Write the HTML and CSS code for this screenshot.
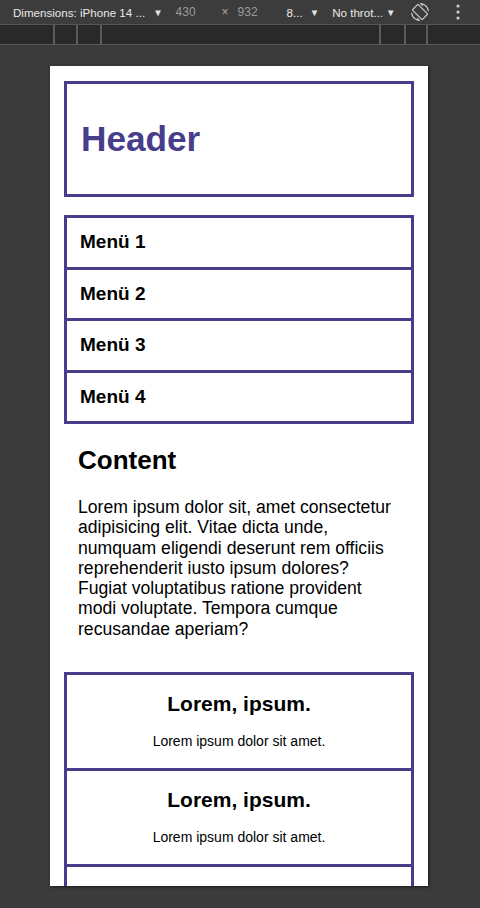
FILE: index.html
```html
<!DOCTYPE html>
<html lang="de">
<head>
<meta charset="utf-8">
<title>Device preview</title>
<link rel="stylesheet" href="styles.css">
</head>
<body>
<div class="toolbar">
  <span class="tb-dim">Dimensions: iPhone 14 ...</span>
  <span class="tb-caret tb-caret1">&#9660;</span>
  <span class="tb-num tb-w">430</span>
  <span class="tb-x">&#215;</span>
  <span class="tb-num tb-h">932</span>
  <span class="tb-zoom">8...</span>
  <span class="tb-caret tb-caret2">&#9660;</span>
  <span class="tb-throt">No throt...</span>
  <span class="tb-caret tb-caret3">&#9660;</span>
  <svg class="tb-rotate" width="18" height="18" viewBox="0 0 24 24" fill="#cfcfcf">
    <path d="M16.48 2.52c3.27 1.55 5.61 4.72 5.970 8.48h1.5C23.44 4.84 18.29 0 12 0l-.66.03 3.81 3.81 1.33-1.32zm-6.25-.77c-.59-.59-1.54-.59-2.12 0L1.75 8.11c-.59.59-.59 1.54 0 2.12l12.02 12.02c.59.59 1.54.59 2.12 0l6.36-6.36c.59-.59.59-1.54 0-2.12L10.23 1.75zm4.6 19.44L2.81 9.17l6.36-6.36 12.02 12.02-6.36 6.36zm-7.31.29C4.25 19.94 1.91 16.76 1.55 13H.05C.56 19.16 5.71 24 12 24l.66-.03-3.81-3.81-1.33 1.32z"/>
  </svg>
  <svg class="tb-kebab" width="4" height="16" viewBox="0 0 4 16" fill="#cfcfcf">
    <circle cx="2" cy="2" r="1.6"/>
    <circle cx="2" cy="8" r="1.6"/>
    <circle cx="2" cy="14" r="1.6"/>
  </svg>
</div>
<div class="ruler">
  <i class="tick t1"></i><i class="tick t2"></i><i class="tick t3"></i><i class="tick t4"></i><i class="tick t5"></i><i class="tick t6"></i>
</div>
<div class="stage">
  <div class="device">
    <header class="site-header">
      <h1>Header</h1>
    </header>
    <nav class="menu">
      <div class="menu-item">Menü 1</div>
      <div class="menu-item">Menü 2</div>
      <div class="menu-item">Menü 3</div>
      <div class="menu-item">Menü 4</div>
    </nav>
    <section class="content">
      <h2>Content</h2>
      <p>Lorem ipsum dolor sit, amet consectetur adipisicing elit. Vitae dicta unde, numquam eligendi deserunt rem officiis reprehenderit iusto ipsum dolores? Fugiat voluptatibus ratione provident modi voluptate. Tempora cumque recusandae aperiam?</p>
    </section>
    <div class="cards">
      <div class="card"><h3>Lorem, ipsum.</h3><p>Lorem ipsum dolor sit amet.</p></div>
      <div class="card"><h3>Lorem, ipsum.</h3><p>Lorem ipsum dolor sit amet.</p></div>
      <div class="card"></div>
    </div>
  </div>
</div>
</body>
</html>
```
FILE: styles.css
```css
* { box-sizing: border-box; }
html, body { margin: 0; padding: 0; }
body {
  width: 480px;
  height: 908px;
  overflow: hidden;
  background: #3b3b3b;
  font-family: "Liberation Sans", Arial, sans-serif;
}

/* DevTools toolbar */
.toolbar {
  height: 25px;
  border-bottom: 1px solid #555555;
  background: #3c3c3c;
  display: flex;
  align-items: center;
  font-size: 11.6px;
  color: #e8e8e8;
  white-space: nowrap;
}
.tb-dim { margin-left: 13px; }
.tb-caret { font-size: 9.5px; color: #e3e3e3; }
.tb-caret1 { margin-left: 8px; }
.tb-num { color: #9a9a9a; font-size: 12px; }
.tb-w { margin-left: 13px; }
.tb-x { margin-left: 26px; color: #b0a8a8; font-size: 12px; }
.tb-h { margin-left: 9px; }
.tb-zoom { margin-left: 29px; }
.tb-caret2 { margin-left: 7px; }
.tb-throt { margin-left: 13px; }
.tb-caret3 { margin-left: 3px; }
.tb-rotate { margin-left: 16px; }
.tb-kebab { margin-left: 27px; }

/* ruler strip */
.ruler {
  height: 20px;
  background: #292929;
  border-bottom: 1px solid #555555;
  display: flex;
}
.tick { display: block; width: 2px; height: 19px; background: #5c5c5c; }
.t1 { margin-left: 53px; }
.t2 { margin-left: 21px; }
.t3 { margin-left: 22px; }
.t4 { margin-left: 277px; }
.t5 { margin-left: 23px; }
.t6 { margin-left: 20px; }

/* device viewport */
.stage { padding: 21px 0 0 50px; }
.device {
  width: 378px;
  height: 820px;
  overflow: hidden;
  background: #ffffff;
  padding: 15px 14px 0 14px;
  box-shadow: 1px 1px 3px rgba(0, 0, 0, 0.55);
  color: #000;
}

.site-header {
  height: 116px;
  border: 3px solid #483d8b;
  display: flex;
  align-items: center;
  padding-left: 14px;
}
.site-header h1 {
  margin: 0;
  font-size: 35.2px;
  line-height: 40.4px;
  font-weight: bold;
  color: #483d8b;
}

.menu {
  margin-top: 18px;
  border: 3px solid #483d8b;
  display: flex;
  flex-direction: column;
}
.menu-item {
  height: 48.5px;
  display: flex;
  align-items: center;
  padding-left: 13px;
  font-size: 19px;
  line-height: 21.8px;
  font-weight: bold;
}
.menu-item + .menu-item { border-top: 3px solid #483d8b; height: 51.5px; }

.content { padding: 0 18px 0 14px; }
.content h2 {
  margin: 22.4px 0 20.8px;
  font-size: 26px;
  line-height: 29.9px;
  font-weight: bold;
}
.content p {
  margin: 0;
  font-size: 17.6px;
  line-height: 20.24px;
}

.cards {
  margin-top: 33.2px;
  border: 3px solid #483d8b;
  border-bottom: none;
}
.card {
  height: 93px;
  padding-top: 16.7px;
  text-align: center;
}
.card + .card { border-top: 3px solid #483d8b; height: 96px; }
.card h3 {
  margin: 0 0 17.3px;
  font-size: 21px;
  line-height: 24.1px;
  font-weight: bold;
}
.card p {
  margin: 0;
  font-size: 14px;
  line-height: 16.1px;
}
```
